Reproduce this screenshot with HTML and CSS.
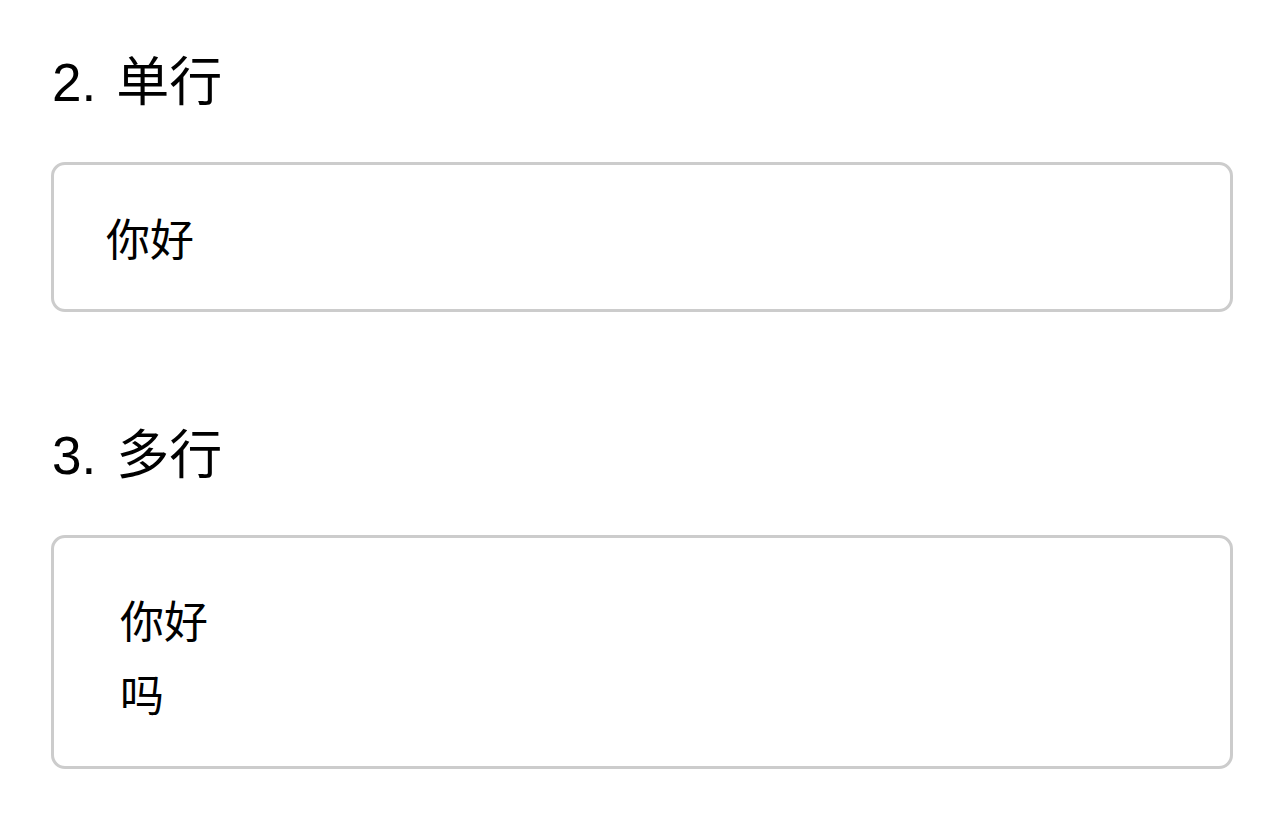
FILE: index.html
```html
<!DOCTYPE html>
<html lang="zh">
<head>
<meta charset="utf-8">
<link rel="stylesheet" href="styles.css">
</head>
<body>
<div class="page">
  <section class="block">
    <h2 class="title"><span class="num">2.</span>单行</h2>
    <div class="field single">你好</div>
  </section>
  <section class="block">
    <h2 class="title"><span class="num">3.</span>多行</h2>
    <div class="field multi"><div class="line">你好</div><div class="line">吗</div></div>
  </section>
</div>
</body>
</html>
```
FILE: styles.css
```css
html, body {
  margin: 0;
  padding: 0;
  background: #fff;
}
body {
  font-family: "Liberation Sans", "Noto Sans CJK SC", sans-serif;
  color: #000;
}
.page {
  padding: 48px 51px 0 51px;
  display: flex;
  flex-direction: column;
}
.block {
  display: flex;
  flex-direction: column;
}
.block + .block {
  margin-top: 109px;
}
.title {
  margin: 0 0 0 1px;
  font-weight: 400;
  font-size: 53px;
  line-height: 70px;
}
.num {
  margin-right: 20px;
}
.field {
  margin-top: 44px;
  border: 3px solid #cccccc;
  border-radius: 14px;
  font-size: 44px;
  box-sizing: border-box;
}
.single {
  height: 150px;
  padding: 0 52px;
  display: flex;
  align-items: center;
}
.multi {
  height: 234px;
  padding: 48px 66px;
}
.line {
  line-height: 74px;
}
```
